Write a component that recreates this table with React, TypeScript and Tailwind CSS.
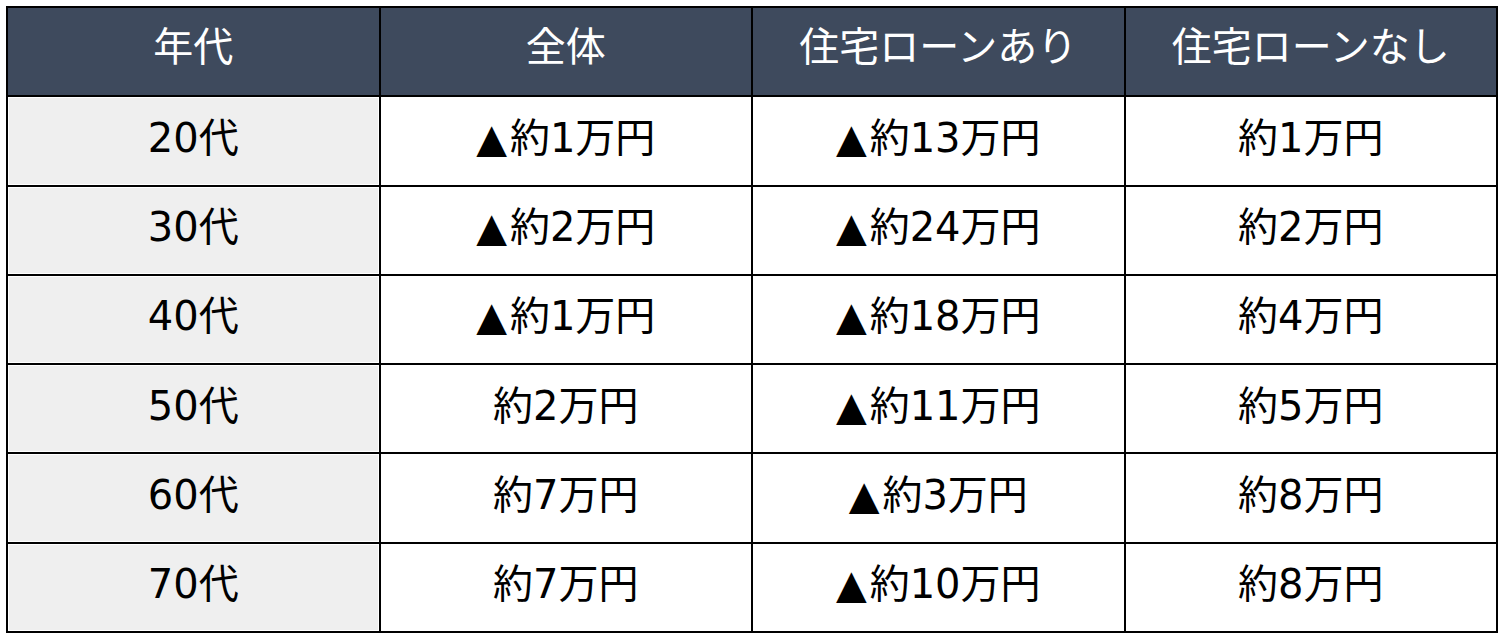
import React from "react";

const headers = ["年代", "全体", "住宅ローンあり", "住宅ローンなし"];
const rows: string[][] = [
  ["20代", "▲約1万円", "▲約13万円", "約1万円"],
  ["30代", "▲約2万円", "▲約24万円", "約2万円"],
  ["40代", "▲約1万円", "▲約18万円", "約4万円"],
  ["50代", "約2万円", "▲約11万円", "約5万円"],
  ["60代", "約7万円", "▲約3万円", "約8万円"],
  ["70代", "約7万円", "▲約10万円", "約8万円"],
];

function Cell({ text }: { text: string }) {
  if (text.startsWith("▲")) {
    return (
      <>
        <span className="mr-[3px]">▲</span>
        {text.slice(1)}
      </>
    );
  }
  return <>{text}</>;
}

export default function App() {
  return (
    <div
      className="w-[1504px] h-[636px] bg-white pt-[6px] pl-[6px]"
      style={{ fontFamily: '"DejaVu Sans", "Noto Sans CJK JP", sans-serif' }}
    >
      <div className="grid grid-cols-4 grid-rows-7 gap-[2px] w-[1492px] h-[627px] bg-black border-2 border-black text-[40px] leading-none">
        {headers.map((h) => (
          <div key={h} className="bg-[#3e4a5d] text-white flex items-center justify-center pb-[10px]">
            {h}
          </div>
        ))}
        {rows.map((r) =>
          r.map((c, i) =>
            i === 0 ? (
              <div key={r[0] + i} className="bg-white p-[1px]">
                <div className="w-full h-full bg-[#efefef] flex items-center justify-center text-black pb-[6px]">
                  {c}
                </div>
              </div>
            ) : (
              <div key={r[0] + i} className="bg-white flex items-center justify-center text-black pb-[6px]">
                <Cell text={c} />
              </div>
            )
          )
        )}
      </div>
    </div>
  );
}
